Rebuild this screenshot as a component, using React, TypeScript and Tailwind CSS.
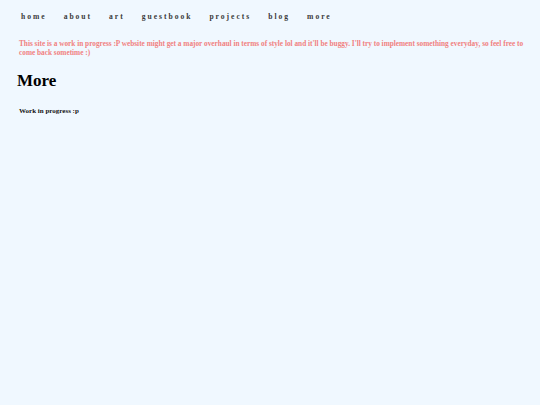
import React from "react";

const links = ["home", "about", "art", "guestbook", "projects", "blog", "more"];

export default function App() {
  return (
    <div className="min-h-[405px] w-full bg-[#f0f8ff] font-['Liberation_Serif','DejaVu_Serif',serif]">
      <nav className="flex gap-[17px] pl-[21px] pt-[11px] text-[7.6px] tracking-[0.26em] text-[#3a3a3a] font-bold">
        {links.map((l) => (
          <a key={l} href="#" className="leading-[12px]">
            {l}
          </a>
        ))}
      </nav>

      <div className="pl-[19px] pr-[4px] pt-[16px]">
        <p className="text-[7.3px] leading-[9px] font-bold text-[#f08080]">
          This site is a work in progress :P website might get a major overhaul in terms of style lol and it'll be buggy. I'll try to implement something everyday, so feel free to come back sometime :)
        </p>
      </div>

      <h1 className="pl-[17px] pt-[12px] text-[17px] leading-[24px] font-bold text-black">
        More
      </h1>

      <p className="pl-[19px] pt-[13px] text-[7px] font-bold text-[#111]">
        Work in progress :p
      </p>
    </div>
  );
}
